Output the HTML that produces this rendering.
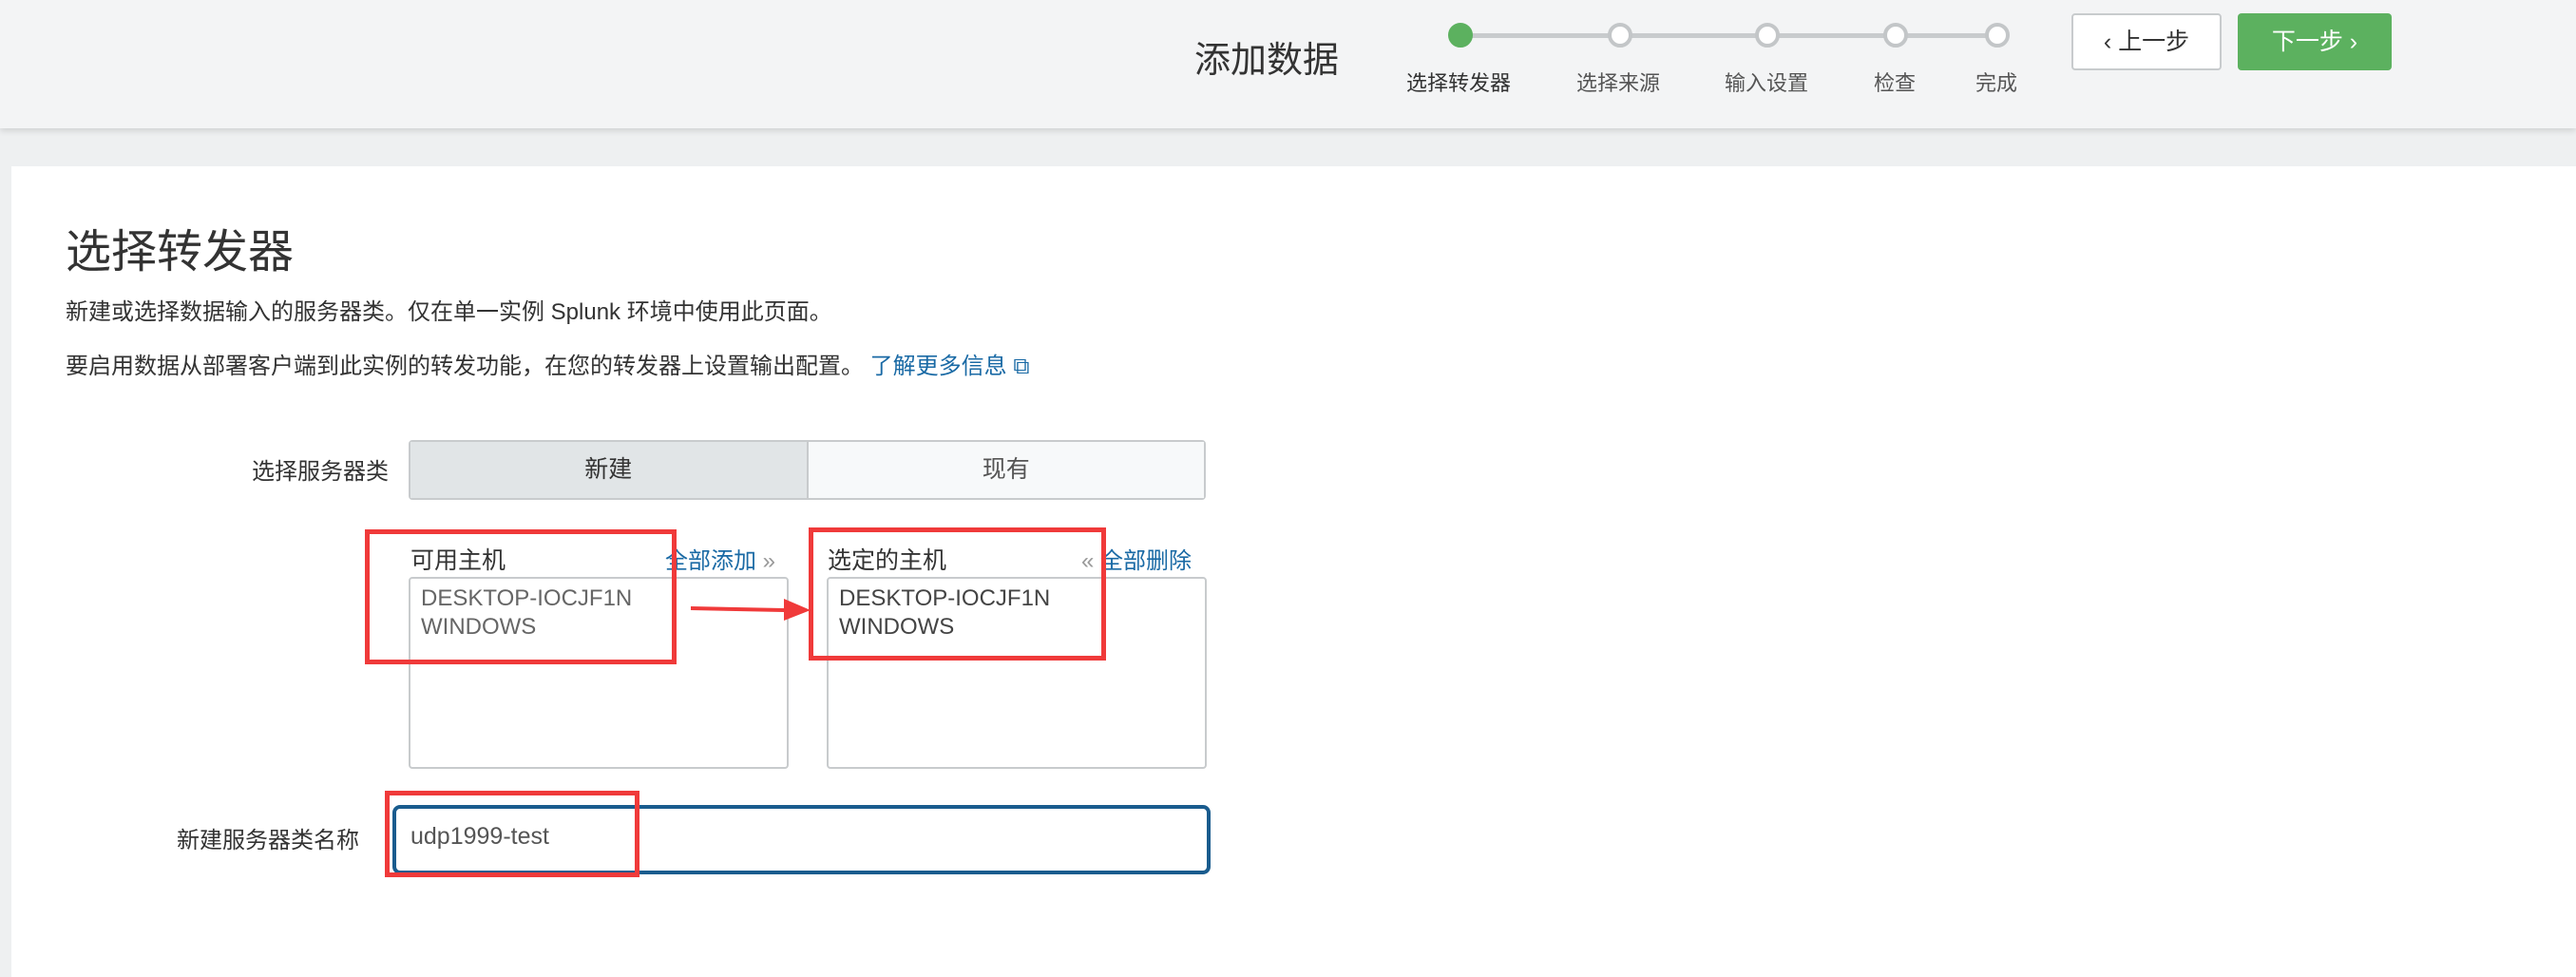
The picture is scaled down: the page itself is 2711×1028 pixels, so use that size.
<!DOCTYPE html>
<html><head><meta charset="utf-8"><style>
body{margin:0;width:2711px;height:1028px;background:#eef0f1;font-family:"Liberation Sans","Noto Sans CJK SC",sans-serif;position:relative;overflow:hidden;color:#333}
.a{position:absolute;white-space:nowrap}
.hdr{position:absolute;left:0;top:0;width:2711px;height:135px;background:#f3f4f5;box-shadow:0 3px 6px rgba(0,0,0,.12)}
.panel{position:absolute;left:12px;top:175px;width:2699px;height:853px;background:#fff}
.dot{position:absolute;width:26px;height:26px;border-radius:50%;border:4px solid #c3c6c8;background:#fff;top:24px;box-sizing:border-box}
.lbl{font-size:22px;color:#555;top:70px}
.box{position:absolute;border:2px solid #c8cbcd;border-radius:4px;background:#fff;box-sizing:border-box}
.red{position:absolute;border:5px solid #f03a3a;box-sizing:border-box}
</style></head><body>
<div class="hdr"></div>
<div class="a" style="left:1257px;top:32px;font-size:38px;color:#333">添加数据</div>
<div class="a" style="left:1537px;top:35px;width:565px;height:5px;background:#c8cbcd"></div>
<div class="dot" style="left:1524px;background:#5cb15f;border-color:#5cb15f"></div>
<div class="dot" style="left:1692px"></div>
<div class="dot" style="left:1847px"></div>
<div class="dot" style="left:1982px"></div>
<div class="dot" style="left:2089px"></div>
<div class="a lbl" style="left:1480px;color:#333">选择转发器</div>
<div class="a lbl" style="left:1659px">选择来源</div>
<div class="a lbl" style="left:1815px">输入设置</div>
<div class="a lbl" style="left:1972px">检查</div>
<div class="a lbl" style="left:2079px">完成</div>
<div class="a" style="left:2180px;top:14px;width:158px;height:60px;border:2px solid #c8cbcd;border-radius:4px;background:#fff;box-sizing:border-box;font-size:25px;text-align:center;line-height:56px;color:#333">‹ 上一步</div>
<div class="a" style="left:2355px;top:14px;width:162px;height:60px;border-radius:4px;background:#5cb15f;font-size:25px;text-align:center;line-height:60px;color:#fff">下一步 ›</div>
<div class="panel"></div>
<div class="a" style="left:69px;top:225px;font-size:48px;color:#333">选择转发器</div>
<div class="a" style="left:69px;top:308px;font-size:24px">新建或选择数据输入的服务器类。仅在单一实例 Splunk 环境中使用此页面。</div>
<div class="a" style="left:69px;top:365px;font-size:24px">要启用数据从部署客户端到此实例的转发功能，在您的转发器上设置输出配置。 <span style="color:#1a6aa5">了解更多信息 ⧉</span></div>
<div class="a" style="left:265px;top:476px;font-size:24px">选择服务器类</div>
<div class="a" style="left:430px;top:463px;width:839px;height:63px;border:2px solid #c8cbcd;border-radius:4px;box-sizing:border-box;display:flex;font-size:25px">
<div style="flex:1;background:#e1e5e7;text-align:center;line-height:59px;border-right:2px solid #c8cbcd">新建</div>
<div style="flex:1;background:#f7f9fa;text-align:center;line-height:59px;color:#555">现有</div></div>
<div class="a" style="left:432px;top:570px;font-size:25px">可用主机</div>
<div class="a" style="left:700px;top:570px;font-size:24px;color:#1a6aa5">全部添加 <span style="color:#999">»</span></div>
<div class="a" style="left:871px;top:570px;font-size:25px">选定的主机</div>
<div class="a" style="left:1138px;top:570px;font-size:24px;color:#1a6aa5"><span style="color:#999">«</span> 全部删除</div>
<div class="box" style="left:430px;top:607px;width:400px;height:202px"></div>
<div class="box" style="left:870px;top:607px;width:400px;height:202px"></div>
<div class="a" style="left:443px;top:615px;font-size:24px;line-height:30px;color:#666">DESKTOP-IOCJF1N<br>WINDOWS</div>
<div class="a" style="left:883px;top:615px;font-size:24px;line-height:30px;color:#444">DESKTOP-IOCJF1N<br>WINDOWS</div>
<div class="red" style="left:384px;top:557px;width:328px;height:142px"></div>
<div class="red" style="left:851px;top:555px;width:313px;height:140px"></div>
<svg class="a" style="left:725px;top:625px" width="130" height="30"><polygon points="2,13 100,15 100,5 128,17 100,28 100,19 2,17" fill="#f03a3a"/></svg>
<div class="a" style="left:186px;top:864px;font-size:24px">新建服务器类名称</div>
<div class="a" style="left:413px;top:847px;width:861px;height:73px;border:4px solid #1a5c8e;border-radius:8px;box-sizing:border-box;background:#fff"></div>
<div class="a" style="left:432px;top:866px;font-size:25px;color:#555">udp1999-test</div>
<div class="red" style="left:405px;top:832px;width:268px;height:91px"></div>
</body></html>
